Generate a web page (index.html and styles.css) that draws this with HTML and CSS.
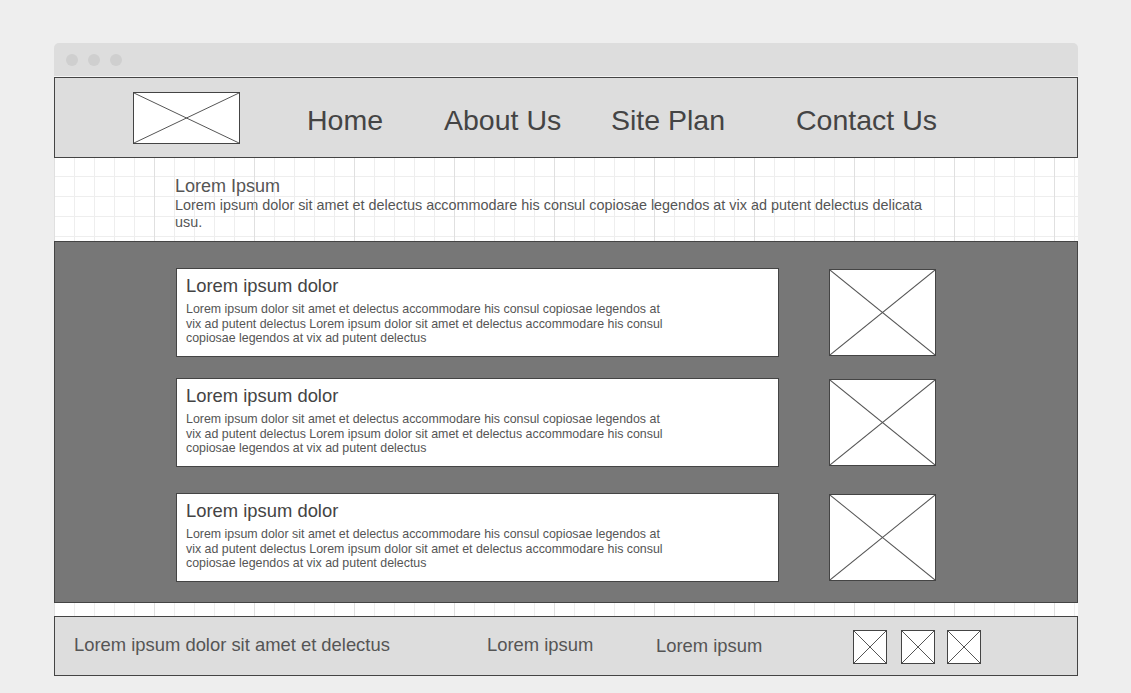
FILE: index.html
```html
<!DOCTYPE html>
<html lang="en">
<head>
    <meta charset="UTF-8">
    <meta name="viewport" content="width=device-width, initial-scale=1.0">
    <title>Wireframe</title>
    <link rel="stylesheet" href="styles.css">
</head>
<body>
    <div class="window">
        <div class="titlebar">
            <span class="dot"></span>
            <span class="dot"></span>
            <span class="dot"></span>
        </div>

        <header class="site-header">
            <svg class="placeholder logo" viewBox="0 0 100 100" preserveAspectRatio="none">
                <line x1="0" y1="0" x2="100" y2="100" vector-effect="non-scaling-stroke" />
                <line x1="100" y1="0" x2="0" y2="100" vector-effect="non-scaling-stroke" />
            </svg>
            <nav class="nav">
                <a href="#">Home</a>
                <a href="#">About Us</a>
                <a href="#">Site Plan</a>
                <a href="#">Contact Us</a>
            </nav>
        </header>

        <main class="grid-area">
            <section class="intro">
                <h2>Lorem Ipsum</h2>
                <p>Lorem ipsum dolor sit amet et delectus accommodare his consul copiosae legendos at vix ad putent delectus delicata usu.</p>
            </section>

            <section class="features">
                <div class="row">
                    <div class="card">
                        <h3>Lorem ipsum dolor</h3>
                        <p>Lorem ipsum dolor sit amet et delectus accommodare his consul copiosae legendos at vix ad putent delectus Lorem ipsum dolor sit amet et delectus accommodare his consul copiosae legendos at vix ad putent delectus</p>
                    </div>
                    <svg class="placeholder thumb" viewBox="0 0 100 100" preserveAspectRatio="none">
                        <line x1="0" y1="0" x2="100" y2="100" vector-effect="non-scaling-stroke" />
                        <line x1="100" y1="0" x2="0" y2="100" vector-effect="non-scaling-stroke" />
                    </svg>
                </div>
                <div class="row">
                    <div class="card">
                        <h3>Lorem ipsum dolor</h3>
                        <p>Lorem ipsum dolor sit amet et delectus accommodare his consul copiosae legendos at vix ad putent delectus Lorem ipsum dolor sit amet et delectus accommodare his consul copiosae legendos at vix ad putent delectus</p>
                    </div>
                    <svg class="placeholder thumb" viewBox="0 0 100 100" preserveAspectRatio="none">
                        <line x1="0" y1="0" x2="100" y2="100" vector-effect="non-scaling-stroke" />
                        <line x1="100" y1="0" x2="0" y2="100" vector-effect="non-scaling-stroke" />
                    </svg>
                </div>
                <div class="row row-last">
                    <div class="card">
                        <h3>Lorem ipsum dolor</h3>
                        <p>Lorem ipsum dolor sit amet et delectus accommodare his consul copiosae legendos at vix ad putent delectus Lorem ipsum dolor sit amet et delectus accommodare his consul copiosae legendos at vix ad putent delectus</p>
                    </div>
                    <svg class="placeholder thumb" viewBox="0 0 100 100" preserveAspectRatio="none">
                        <line x1="0" y1="0" x2="100" y2="100" vector-effect="non-scaling-stroke" />
                        <line x1="100" y1="0" x2="0" y2="100" vector-effect="non-scaling-stroke" />
                    </svg>
                </div>
            </section>

            <div class="strip"></div>
        </main>

        <footer class="site-footer">
            <span>Lorem ipsum dolor sit amet et delectus</span>
            <span>Lorem ipsum</span>
            <span class="footer-link">Lorem ipsum</span>
            <div class="social">
                <svg class="placeholder icon" viewBox="0 0 100 100" preserveAspectRatio="none">
                    <line x1="0" y1="0" x2="100" y2="100" vector-effect="non-scaling-stroke" />
                    <line x1="100" y1="0" x2="0" y2="100" vector-effect="non-scaling-stroke" />
                </svg>
                <svg class="placeholder icon" viewBox="0 0 100 100" preserveAspectRatio="none">
                    <line x1="0" y1="0" x2="100" y2="100" vector-effect="non-scaling-stroke" />
                    <line x1="100" y1="0" x2="0" y2="100" vector-effect="non-scaling-stroke" />
                </svg>
                <svg class="placeholder icon" viewBox="0 0 100 100" preserveAspectRatio="none">
                    <line x1="0" y1="0" x2="100" y2="100" vector-effect="non-scaling-stroke" />
                    <line x1="100" y1="0" x2="0" y2="100" vector-effect="non-scaling-stroke" />
                </svg>
            </div>
        </footer>
    </div>
</body>
</html>
```

FILE: styles.css
```css
body {
    margin: 0;
    padding: 43px 0 0 54px;
    background-color: #eeeeee;
    font-family: "Liberation Sans", Arial, sans-serif;
    color: #555;
}

.window {
    width: 1024px;
}

.titlebar {
    height: 33px;
    display: flex;
    align-items: center;
    gap: 10px;
    padding-left: 12px;
    background-color: #dddddd;
    border-bottom: 1px solid #f4f4f4;
    border-radius: 5px 5px 0 0;
}

.dot {
    width: 12px;
    height: 12px;
    border-radius: 50%;
    background-color: #cfcfcf;
}

/* placeholder boxes with a cross */
.placeholder {
    display: block;
    box-sizing: border-box;
    background-color: #fff;
    border: 1px solid #444;
}

.placeholder line {
    stroke: #555;
    stroke-width: 1;
}

.site-header {
    height: 81px;
    box-sizing: border-box;
    display: flex;
    align-items: center;
    padding-left: 78px;
    background-color: #dddddd;
    border: 1px solid #444;
}

.logo {
    width: 107px;
    height: 52px;
}

.nav {
    display: grid;
    grid-template-columns: 137px 167px 185px auto;
    margin-left: 67px;
    margin-top: 6px;
}

.nav a {
    font-size: 28.5px;
    color: #444;
    text-decoration: none;
}

.grid-area {
    background-color: #fff;
    background-image:
        linear-gradient(to right, #e0e0e0 1px, transparent 1px),
        linear-gradient(to right, #eeeeee 1px, transparent 1px),
        linear-gradient(to bottom, #eeeeee 1px, transparent 1px);
    background-size: 100px 100%, 20px 20px, 20px 20px;
    background-position: 0 0, 0 0, 0 18px;
}

.intro {
    height: 83px;
    box-sizing: border-box;
    padding: 18px 0 0 121px;
}

.intro h2 {
    margin: 0;
    font-size: 18px;
    font-weight: normal;
    line-height: 20px;
    color: #555;
}

.intro p {
    width: 760px;
    margin: 1px 0 0;
    font-size: 14.4px;
    line-height: 17px;
}

.features {
    padding: 26px 0 20px 121px;
    background-color: #777777;
    border: 1px solid #444;
}

.row {
    display: flex;
    align-items: center;
    gap: 50px;
}

.row + .row {
    margin-top: 21px;
}

.row + .row-last {
    margin-top: 26px;
}

.card {
    width: 603px;
    height: 89px;
    box-sizing: border-box;
    padding: 6px 9px 0;
    background-color: #fff;
    border: 1px solid #444;
}

.card h3 {
    margin: 0 0 5px;
    font-size: 18.4px;
    font-weight: normal;
    line-height: 22px;
    color: #444;
}

.card p {
    max-width: 485px;
    margin: 0;
    font-size: 12.4px;
    line-height: 14.5px;
}

.thumb {
    width: 107px;
    height: 87px;
}

.strip {
    height: 13px;
}

.site-footer {
    height: 60px;
    box-sizing: border-box;
    display: grid;
    grid-template-columns: 413px 169px 197px auto;
    align-items: center;
    padding: 0 0 2px 19px;
    background-color: #dddddd;
    border: 1px solid #444;
    font-size: 18.4px;
}

.footer-link {
    margin-top: 2px;
}

.social {
    display: flex;
    gap: 14px;
    margin-top: 3px;
}

.social .icon:last-child {
    margin-left: -2px;
}

.icon {
    width: 34px;
    height: 34px;
}
```
